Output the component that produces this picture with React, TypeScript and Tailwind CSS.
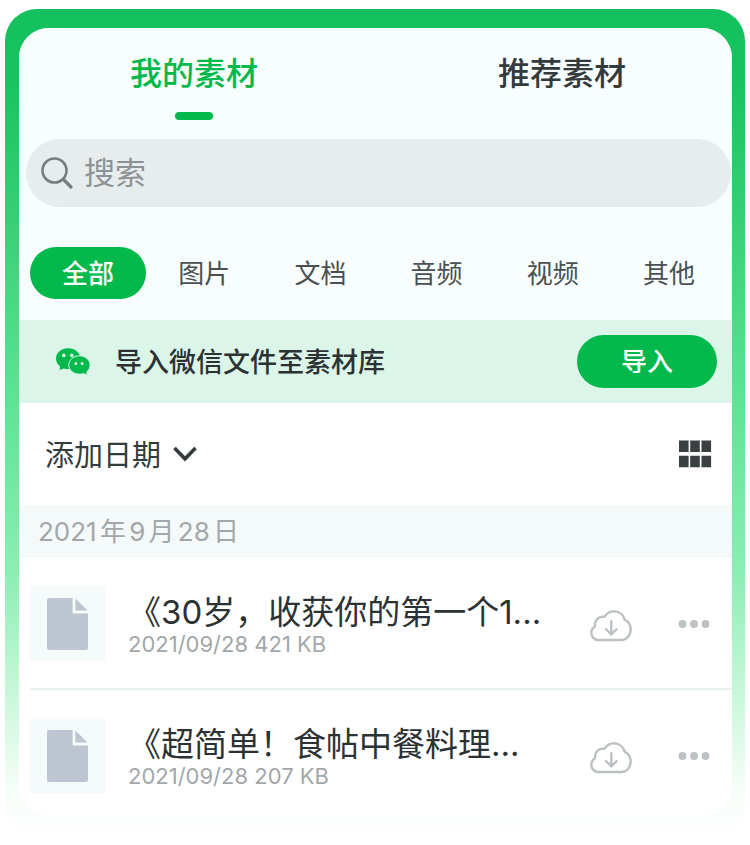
import React from 'react';

interface FileItem {
  id: number;
  name: string;
  date: string;
  size: string;
}

const categories = ['全部', '图片', '文档', '音频', '视频', '其他'];

const files: FileItem[] = [
  { id: 1, name: '《30岁，收获你的第一个1...', date: '2021/09/28', size: '421 KB' },
  { id: 2, name: '《超简单！食帖中餐料理...', date: '2021/09/28', size: '207 KB' },
];

const SearchIcon = () => (
  <svg className="w-8 h-8 shrink-0" viewBox="0 0 32 32" fill="none" stroke="#777d80" strokeLinecap="round">
    <circle cx="13.5" cy="13.5" r="12" strokeWidth="2.6" />
    <path d="M22.5 22.5L30 30" strokeWidth="3.2" />
  </svg>
);

const WechatIcon = () => (
  <svg className="w-9 h-7 shrink-0" viewBox="0 0 36 28">
    <path
      fill="#04b94b"
      d="M13.2 0.2C6.2 0.2 1 4.800 1 10.600c0 3.200 1.500 6 4 7.900L4.600 22l4.300-1.500c1.400.400 2.800.600 4.300.600 7 0 12.400-4.600 12.400-10.300S20.200.2 13.200.2z"
    />
    <path
      fill="#04b94b"
      stroke="#dcf5e9"
      strokeWidth="1"
      d="M24.400 7.800c6 0 10.700 4.100 10.700 9.200 0 2.900-1.300 5.300-3.400 6.900l.6 3.400-3.800-1.700c-1.300.4-2.700.6-4.100.6-6 0-10.600-4.100-10.600-9.200S18.400 7.800 24.400 7.800z"
    />
    <circle cx="8.800" cy="7.400" r="1.800" fill="#dcf5e9" />
    <circle cx="16.800" cy="7.400" r="1.800" fill="#dcf5e9" />
    <circle cx="20.900" cy="15.400" r="1.500" fill="#dcf5e9" />
    <circle cx="27.200" cy="15.400" r="1.500" fill="#dcf5e9" />
  </svg>
);

const ChevronIcon = () => (
  <svg className="w-6 h-4" viewBox="0 0 24 16" fill="none" stroke="#343b3d" strokeWidth="3.6">
    <path d="M1.5 2L12 12.8L22.5 2" />
  </svg>
);

const GridIcon = () => (
  <svg className="w-[34px] h-7" viewBox="0 0 34 28" fill="#3a4042">
    <path d="M1 0.5h9.6v11.6H1zM12.2 0.5h9.6v11.6h-9.6zM23.5 0.5h9.6v11.6h-9.6zM1 15.7h9.6v11.6H1zM12.2 15.7h9.6v11.6h-9.6zM23.5 15.7h9.6v11.6h-9.6z" />
  </svg>
);

const DocIcon = () => (
  <svg className="w-[41px] h-[52px]" viewBox="0 0 41 52" fill="#bdc5d0">
    <path d="M2 0h23.6v15.4H41V50a2 2 0 0 1-2 2H2a2 2 0 0 1-2-2V2a2 2 0 0 1 2-2z" />
    <path d="M28.4 0.4L40.6 12.6H28.4z" />
  </svg>
);

const CloudIcon = () => (
  <svg
    className="w-[42px] h-8"
    viewBox="0 0 42 32"
    fill="none"
    stroke="#bcc1c3"
    strokeWidth="2.4"
    strokeLinecap="round"
    strokeLinejoin="round"
  >
    <path d="M8.3 30C4.2 30 1.3 26.6 1.3 22.8c0-3.300 1.900-5.400 3.700-6.600-.600-5.900 3.500-10.400 9.300-9.300C17 3 20.500 1.300 24 1.300c5.300 0 9.300 3.500 10.600 8.300 3.900 2 6.100 5.600 6.100 9.800 0 6.200-4.200 10.600-9.400 10.600z" />
    <path d="M21.300 11.300v12.800M16 19.200l5.300 5.200 5.300-5.200" />
  </svg>
);

const MoreIcon = () => (
  <svg className="w-8 h-2" viewBox="0 0 32 8" fill="#bcc1c3">
    <circle cx="4.5" cy="4" r="3.9" />
    <circle cx="16" cy="4" r="3.9" />
    <circle cx="27.5" cy="4" r="3.9" />
  </svg>
);

const FileRow: React.FC<{ file: FileItem }> = ({ file }) => (
  <li className="ml-[11px] pt-7 pb-[27px] pr-[22px] flex items-center border-b-2 border-[#e8efef] last:border-b-0 last:pb-[22px]">
    <div className="size-[75px] shrink-0 bg-[#f5fafb] flex items-center justify-center">
      <DocIcon />
    </div>
    <div className="ml-[23px] flex-1 min-w-0">
      <h3 className="text-[33px] leading-10 text-[#2c3234] whitespace-nowrap">{file.name}</h3>
      <p className="text-[22px] leading-6 text-[#a2a7a9] whitespace-nowrap">
        {file.date} {file.size}
      </p>
    </div>
    <button aria-label="下载" className="shrink-0 pt-1">
      <CloudIcon />
    </button>
    <button aria-label="更多" className="shrink-0 ml-[46px] h-8 flex items-center">
      <MoreIcon />
    </button>
  </li>
);

const App: React.FC = () => {
  return (
    <div className='bg-white px-[5px] pt-[9px] pb-2 font-[Inter,"Noto_Sans_CJK_SC",sans-serif]'>
      <div className="rounded-[32px] pt-[19px] pl-[14px] pr-[13px] pb-[22px] bg-[linear-gradient(to_bottom,#14c05e_0%,#18c260_8%,#35ce74_24%,#5fe496_48%,#8beeb3_68%,#cdf8dc_84%,#f6fef8_94%,#ffffff_100%)]">
        <main className="rounded-[30px] overflow-hidden bg-white">
          <div className="bg-[#f8fefe]">
            <nav className="flex justify-between pl-[111px] pr-[106px] pt-6 pb-[19px]">
              <button className="flex flex-col items-center text-[32px] leading-[44px] font-medium text-[#04b94b]">
                我的素材
                <span className="mt-4 w-[38px] h-2 rounded-full bg-[#04b94b]" />
              </button>
              <button className="self-start text-[32px] leading-[44px] font-medium text-[#343b3d]">推荐素材</button>
            </nav>

            <label className="ml-[7px] mr-px h-[68px] px-[15px] flex items-center gap-[11px] rounded-full bg-[#e7eded]">
              <SearchIcon />
              <input
                type="text"
                aria-label="搜索"
                placeholder="搜索"
                className="flex-1 min-w-0 bg-transparent outline-none text-[31px] placeholder:text-[#8c9295]"
              />
            </label>

            <div className="grid grid-cols-6 pl-[11px] pr-[5px] pt-10 pb-[21px]">
              {categories.map((name, index) => (
                <button
                  key={name}
                  className={`h-[52px] rounded-full text-[26px] ${
                    index === 0 ? 'bg-[#04b94b] text-white font-medium' : 'text-[#4a5052]'
                  }`}
                >
                  {name}
                </button>
              ))}
            </div>
          </div>

          <section className="h-[83px] pl-9 pr-[15px] flex items-center bg-[#dcf5e9]">
            <WechatIcon />
            <p className="ml-6 pt-1 flex-1 text-[27px] font-medium text-[#2c3234]">导入微信文件至素材库</p>
            <button className="w-[140px] h-[53px] rounded-full bg-[#04b94b] text-white text-[26px] font-medium">
              导入
            </button>
          </section>

          <div className="h-[102px] pl-[26px] pr-5 flex items-center justify-between">
            <button className="flex items-center gap-3 text-[29px] text-[#343b3d]">
              <span className="pt-1">添加日期</span>
              <ChevronIcon />
            </button>
            <button aria-label="网格视图">
              <GridIcon />
            </button>
          </div>

          <h2 className="h-[53px] pl-[19px] flex items-center bg-[#f4f9fa] text-[26px] text-[#a2a7a9] [text-autospace:normal]">
            2021年9月28日
          </h2>

          <ul>
            {files.map((file) => (
              <FileRow key={file.id} file={file} />
            ))}
          </ul>
        </main>
      </div>
    </div>
  );
};

export default App;
